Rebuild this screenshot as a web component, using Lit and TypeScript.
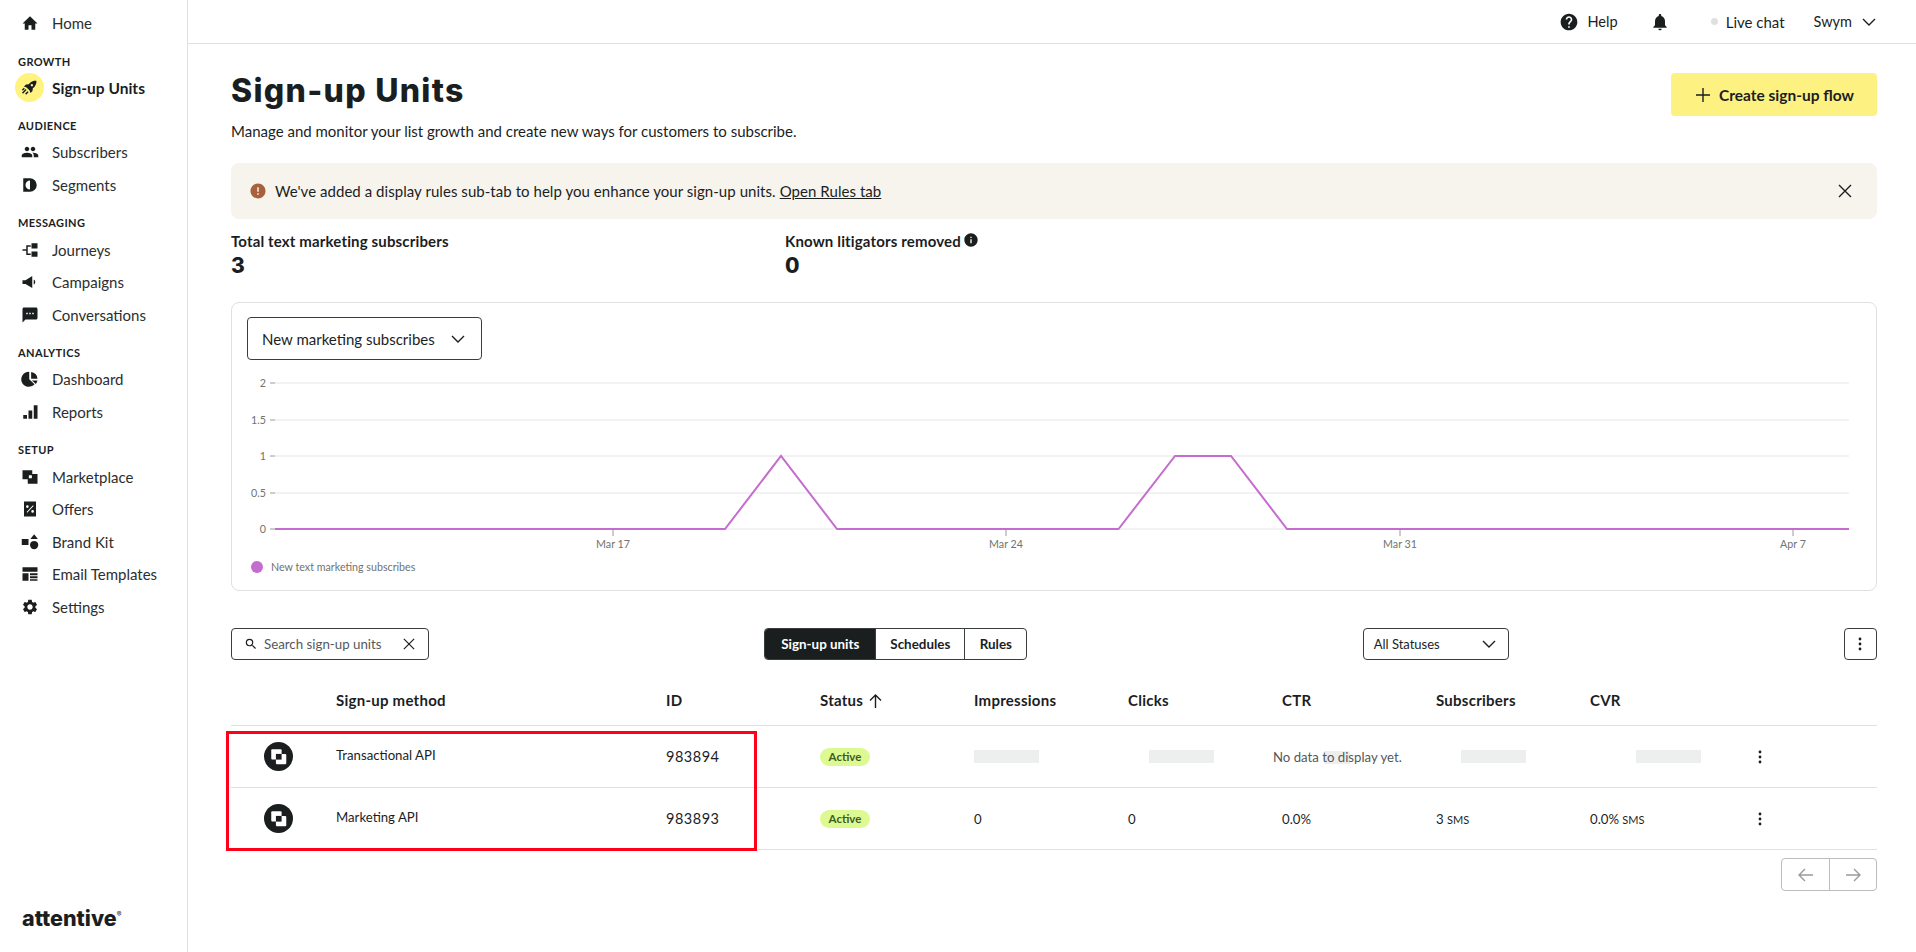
import { LitElement, html, css, svg } from 'lit';
import { customElement } from 'lit/decorators.js';

const icon = (body: unknown, size = 18) =>
    html`<svg width=${size} height=${size} viewBox="0 0 24 24" fill="currentColor">${body}</svg>`;

const chevron = (w = 14) => html`<svg width=${w} height=${w} viewBox="0 0 14 14" fill="none" stroke="currentColor" stroke-width="1.4"><path d="M1 4l6 6 6-6"/></svg>`;
const cross = (w = 14) => html`<svg width=${w} height=${w} viewBox="0 0 14 14" fill="none" stroke="currentColor" stroke-width="1.4"><path d="M1 1l12 12M13 1L1 13"/></svg>`;
const kebab = html`<svg width="4" height="14" viewBox="0 0 4 14" fill="currentColor"><circle cx="2" cy="2" r="1.4"/><circle cx="2" cy="7" r="1.4"/><circle cx="2" cy="12" r="1.4"/></svg>`;

const ICONS: Record<string, unknown> = {
    home: svg`<path d="M10 21v-6h4v6h5v-8.500h3L12 3 2 12.500h3V21z"/>`,
    rocket: svg`<path d="M21 3c-4.400.100-7.700 1.800-10 4.800L7.600 8.200 5 10.800l3.300 1.100 3.800 3.800 1.100 3.300 2.600-2.600.400-3.400c3-2.300 4.700-5.600 4.800-10zM15 10.500a1.500 1.500 0 1 1 0-3 1.500 1.500 0 0 1 0 3z"/><path d="M7 14l-4.500 4.500 1.300 1.300L8.300 15.300zM9.500 16.700l-3 3 1.300 1.300 3-3zM4.800 12.300l-2.500 2.500 1.300 1.300 2.500-2.500z"/>`,
    people: svg`<path d="M16 11c1.660 0 2.990-1.340 2.990-3S17.660 5 16 5c-1.660 0-3 1.340-3 3s1.340 3 3 3zm-8 0c1.660 0 2.990-1.340 2.990-3S9.660 5 8 5C6.340 5 5 6.340 5 8s1.340 3 3 3zm0 2c-2.330 0-7 1.170-7 3.500V19h14v-2.500c0-2.330-4.670-3.500-7-3.500zm8 0c-.290 0-.620.020-.970.050 1.160.840 1.970 1.970 1.970 3.450V19h6v-2.500c0-2.330-4.670-3.500-7-3.500z"/>`,
    segments: svg`<path fill-rule="evenodd" d="M3 3h9a9 9 0 0 1 0 18H3zM12 6a6 6 0 0 0 0 12z"/>`,
    journeys: svg`<rect x="14" y="3" width="8" height="7"/><rect x="14" y="14" width="8" height="7"/><path d="M2 11h5V5.500h6v2H9V16.500h4v2H7V13H2z"/>`,
    campaigns: svg`<path d="M2 9.500h4L15 4v16l-9-5.500H2zM17 8.500a4 4 0 0 1 0 7z"/>`,
    chat: svg`<path d="M20 2H4c-1.100 0-2 .900-2 2v18l4-4h14c1.100 0 2-.900 2-2V4c0-1.100-.900-2-2-2zM9 11H7V9h2v2zm4 0h-2V9h2v2zm4 0h-2V9h2v2z"/>`,
    pie: svg`<path d="M11 2.500v9.800l7 6.600A10 10 0 1 1 11 2.500zM13.500 2.500A9.700 9.700 0 0 1 22 11.500h-8.500zM14.500 14H22a10 10 0 0 1-2.200 4.500z"/>`,
    bars: svg`<rect x="3" y="16" width="5" height="5"/><rect x="10" y="10" width="5" height="11"/><rect x="17" y="3" width="5" height="18"/>`,
    market: svg`<path fill-rule="evenodd" d="M2 3h13v5h7v13H9v-6H2zM10.500 9.500v4h4v-4z"/>`,
    offers: svg`<path fill-rule="evenodd" d="M4 2h16v20H4zM8.500 7a1.800 1.800 0 1 0 0 3.600 1.800 1.800 0 0 0 0-3.600zM15.500 13.400a1.800 1.800 0 1 0 0 3.600 1.800 1.800 0 0 0 0-3.600zM16 7l-8.500 9 .8.900 8.500-9z"/>`,
    brand: svg`<rect x="1" y="8" width="9" height="8"/><path d="M17.500 1.500l5 6.500h-10z"/><circle cx="17.500" cy="16" r="5.500"/>`,
    email: svg`<path d="M2 3h20v6H2zM2 11h8v10H2zM12 11h10v2.500H12zM12 15h10v2.500H12zM12 19h10v2H12z"/>`,
    gear: svg`<path d="M19.140 12.940c.040-.300.060-.610.060-.940 0-.320-.020-.640-.070-.940l2.030-1.580c.180-.140.230-.410.120-.610l-1.920-3.320c-.120-.220-.370-.290-.590-.220l-2.390.960c-.500-.380-1.030-.700-1.620-.940l-.360-2.540c-.040-.240-.240-.410-.480-.410h-3.840c-.240 0-.430.170-.470.410l-.360 2.540c-.590.240-1.130.570-1.620.940l-2.390-.960c-.220-.080-.470 0-.590.220L2.740 8.870c-.120.210-.080.470.120.610l2.030 1.580c-.050.300-.090.630-.090.940s.020.640.070.940l-2.030 1.580c-.180.140-.230.410-.120.610l1.920 3.320c.120.220.370.290.590.220l2.390-.960c.500.380 1.030.700 1.620.940l.360 2.540c.050.240.240.410.480.410h3.840c.240 0 .440-.170.470-.410l.360-2.540c.590-.240 1.130-.560 1.620-.940l2.390.960c.220.080.470 0 .590-.220l1.920-3.320c.120-.220.070-.470-.120-.610l-2.010-1.580zM12 15.600c-1.980 0-3.600-1.620-3.600-3.600s1.620-3.600 3.600-3.600 3.600 1.620 3.600 3.600-1.620 3.600-3.600 3.600z"/>`,
    help: svg`<path d="M12 2C6.480 2 2 6.480 2 12s4.480 10 10 10 10-4.480 10-10S17.520 2 12 2zm1 17h-2v-2h2v2zm2.070-7.750l-.900.920C13.450 12.900 13 13.500 13 15h-2v-.500c0-1.100.450-2.100 1.170-2.830l1.240-1.260c.370-.360.590-.860.590-1.410 0-1.100-.900-2-2-2s-2 .900-2 2H8c0-2.210 1.790-4 4-4s4 1.790 4 4c0 .880-.360 1.680-.930 2.250z"/>`,
    bell: svg`<path d="M12 22c1.100 0 2-.900 2-2h-4c0 1.100.900 2 2 2zm6-6v-5c0-3.070-1.630-5.640-4.500-6.320V4c0-.830-.670-1.500-1.500-1.500s-1.500.670-1.500 1.500v.680C7.640 5.360 6 7.920 6 11v5l-2 2v1h16v-1l-2-2z"/>`,
    info: svg`<path d="M12 2C6.480 2 2 6.480 2 12s4.480 10 10 10 10-4.480 10-10S17.520 2 12 2zm1 15h-2v-6h2v6zm0-8h-2V7h2v2z"/>`,
    alert: svg`<path d="M12 2C6.480 2 2 6.480 2 12s4.480 10 10 10 10-4.480 10-10S17.520 2 12 2zm1 15h-2v-2h2v2zm0-4h-2V7h2v6z"/>`,
    search: svg`<path d="M15.500 14h-.790l-.280-.270A6.470 6.470 0 0 0 16 9.500 6.500 6.500 0 1 0 9.500 16c1.610 0 3.090-.590 4.230-1.570l.270.280v.790l5 4.990L20.490 19l-4.990-5zm-6 0C7.010 14 5 11.990 5 9.500S7.010 5 9.500 5 14 7.010 14 9.500 11.990 14 9.500 14z"/>`,
};

const NAV = [
    { items: [{ label: 'Home', icon: 'home' }] },
    { title: 'GROWTH', items: [{ label: 'Sign-up Units', icon: 'rocket', active: true }] },
    { title: 'AUDIENCE', items: [{ label: 'Subscribers', icon: 'people' }, { label: 'Segments', icon: 'segments' }] },
    { title: 'MESSAGING', items: [{ label: 'Journeys', icon: 'journeys' }, { label: 'Campaigns', icon: 'campaigns' }, { label: 'Conversations', icon: 'chat' }] },
    { title: 'ANALYTICS', items: [{ label: 'Dashboard', icon: 'pie' }, { label: 'Reports', icon: 'bars' }] },
    { title: 'SETUP', items: [{ label: 'Marketplace', icon: 'market' }, { label: 'Offers', icon: 'offers' }, { label: 'Brand Kit', icon: 'brand' }, { label: 'Email Templates', icon: 'email' }, { label: 'Settings', icon: 'gear' }] },
];

const COLUMNS = ['', 'Sign-up method', 'ID', 'Status', 'Impressions', 'Clicks', 'CTR', 'Subscribers', 'CVR', ''];

// chart coordinates are local to the card, x - 232 and y - 360 of the page
const GRID = [{ y: 23, l: '2' }, { y: 60, l: '1.5' }, { y: 96, l: '1' }, { y: 133, l: '0.5' }, { y: 169, l: '0' }];
const TICKS = [{ x: 381, l: 'Mar 17' }, { x: 774, l: 'Mar 24' }, { x: 1168, l: 'Mar 31' }, { x: 1561, l: 'Apr 7' }];
const LINE = '43,169 493,169 549,96 605,169 886.500,169 943,96 999,96 1055,169 1617,169';

@customElement('app-root')
export class AppRoot extends LitElement {
    static styles = css`
        :host {
            display: block;
            font-family: Lato, "Liberation Sans", sans-serif;
            color: #1b1e1f;
            font-size: 15px;
        }

        .page {
            display: flex;
            min-height: 952px;
        }

        .sidebar {
            flex: none;
            box-sizing: border-box;
            border-right: 1px solid #e0e0e0;
            width: 188px;
            padding-top: 7px;
            display: flex;
            flex-direction: column;
        }

        .nav-title {
            height: 21px;
            line-height: 21px;
            margin-top: 11px;
            padding-left: 18px;
            font-size: 11px;
            font-weight: 700;
            letter-spacing: 0.4px;
        }

        .nav-item {
            height: 32.6px;
            display: flex;
            align-items: center;
            font-size: 15px;
            color: #2b2e2f;
            white-space: nowrap;
        }

        .nav-icon {
            width: 52px;
            flex: none;
            display: flex;
            box-sizing: border-box;
            padding-left: 21px;
            color: #1b1e1f;
        }

        .nav-item.active {
            font-weight: 700;
            font-size: 15.500px;
            color: #1b1e1f;
        }

        .nav-item.active .nav-icon {
            padding-left: 15px;
        }

        .nav-item.active .nav-icon svg {
            flex: none;
            background: #fff27f;
            border-radius: 50%;
            padding: 5px;
        }

        .logo {
            margin-top: auto;
            padding: 0 0 22px 22px;
            font-family: Inter, sans-serif;
            font-size: 21.500px;
            font-weight: 800;
            line-height: 24px;
        }

        .logo sup {
            font-size: 7px;
            font-weight: 400;
            vertical-align: 9px;
            line-height: 0;
        }

        .main {
            flex: 1;
            min-width: 0;
        }

        .topbar {
            height: 43px;
            border-bottom: 1px solid #e0e0e0;
            display: flex;
            align-items: center;
            justify-content: flex-end;
            padding-right: 40px;
        }

        .topbar span {
            display: flex;
            align-items: center;
        }

        .help {
            font-size: 14.600px;
        }

        .help svg {
            margin-right: 8px;
        }

        .bell {
            margin-left: 32px;
        }

        .live {
            margin-left: 41px;
        }

        .live i {
            width: 7px;
            height: 7px;
            border-radius: 50%;
            background: #e0e0e0;
            margin-right: 8px;
        }

        .swym {
            margin-left: 29px;
            font-size: 14.5px;
        }

        .swym svg {
            margin-left: 10px;
        }

        .content {
            padding: 29px 39px 0 43px;
        }

        .title-row {
            display: flex;
            justify-content: space-between;
            align-items: flex-start;
        }

        h1 {
            margin: -2px 0 0;
            font-family: Inter, sans-serif;
            font-size: 32px;
            line-height: 40px;
            font-weight: 800;
            letter-spacing: 1.300px;
        }

        .sub {
            margin: 10px 0 0;
            line-height: 20px;
        }

        .create {
            width: 206px;
            height: 43px;
            box-sizing: border-box;
            padding-left: 2px;
            background: #fdf182;
            border-radius: 4px;
            display: flex;
            align-items: center;
            justify-content: center;
            gap: 9px;
            font-weight: 700;
            font-size: 15.500px;
        }

        .banner {
            margin-top: 22px;
            height: 56px;
            background: #f7f4ee;
            border-radius: 8px;
            display: flex;
            align-items: center;
            padding: 0 25px 0 18px;
            letter-spacing: 0.05px;
        }

        .banner .alert {
            color: #a9603d;
            margin-right: 8px;
            display: flex;
        }

        .banner u {
            margin-left: 4px;
        }

        .banner .close {
            margin-left: auto;
            display: flex;
        }

        .stats {
            display: flex;
            margin-top: 12px;
        }

        .stat {
            width: 554px;
        }

        .stat-label {
            font-weight: 700;
            line-height: 20px;
            letter-spacing: 0.15px;
            display: flex;
            align-items: center;
            gap: 2px;
        }

        .stat-label svg {
            margin-top: -3px;
        }

        .stat-value {
            font-family: Inter, sans-serif;
            font-weight: 800;
            font-size: 21px;
            line-height: 24px;
            margin-top: 3px;
        }

        .card {
            margin-top: 24px;
            height: 289px;
            box-sizing: border-box;
            border: 1px solid #e0e0e0;
            border-radius: 8px;
            padding-top: 14px;
        }

        .select {
            display: flex;
            align-items: center;
            justify-content: space-between;
            box-sizing: border-box;
            border: 1px solid #3a3d3e;
            border-radius: 4px;
            background: #fff;
        }

        .chart-select {
            width: 235px;
            height: 43px;
            margin-left: 15px;
            padding: 0 16px 0 14px;
        }

        .chart {
            display: block;
        }

        .chart text {
            font-family: Lato, "Liberation Sans", sans-serif;
            font-size: 10.700px;
            fill: #70736f;
        }

        .toolbar {
            margin-top: 37px;
            height: 32px;
            display: flex;
            justify-content: space-between;
            font-size: 13.300px;
        }

        .search {
            width: 198px;
            padding: 0 13px 0 12px;
            color: #55585a;
        }

        .search span {
            display: flex;
            align-items: center;
            gap: 6px;
            flex: 1;
        }

        .search svg:last-child {
            color: #1b1e1f;
        }

        .tabs {
            display: flex;
            border: 1px solid #3a3d3e;
            border-radius: 4px;
            overflow: hidden;
            font-weight: 700;
            font-size: 13.400px;
        }

        .tab {
            display: flex;
            align-items: center;
            justify-content: center;
            box-sizing: border-box;
        }

        .tab + .tab {
            border-left: 1px solid #3a3d3e;
        }

        .tab.on {
            background: #1b1e1f;
            color: #fff;
            width: 110px;
        }

        .tab.sched {
            width: 89px;
        }

        .tab.rules {
            width: 62px;
        }

        .status-select {
            width: 146px;
            padding: 0 12px 0 10px;
            font-size: 13px;
        }

        .more {
            width: 33px;
            justify-content: center;
        }

        .table {
            position: relative;
            margin-top: 15px;
            isolation: isolate;
        }

        .row {
            display: grid;
            grid-template-columns: 105px 330px repeat(7, 154px) 1fr;
            align-items: center;
            height: 61px;
            border-bottom: 1px solid #e0e0e0;
            font-size: 13.200px;
        }

        .row.head {
            height: 50px;
            font-size: 15px;
            font-weight: 700;
            letter-spacing: 0.25px;
        }

        .sort {
            display: inline-flex;
            vertical-align: -2px;
            margin-left: 6px;
        }

        .unit {
            display: flex;
            justify-content: center;
            width: 94px;
        }

        .method {
            margin-top: -4px;
        }

        .id {
            font-size: 14.500px;
            letter-spacing: 0.5px;
        }

        .badge {
            display: inline-block;
            width: 50px;
            height: 18px;
            line-height: 18px;
            text-align: center;
            border-radius: 9px;
            background: #ddfa92;
            color: #3f5a24;
            font-size: 11.500px;
            font-weight: 700;
        }

        .skel {
            height: 13px;
            width: 65px;
            background: #edefee;
        }

        .clicks-skel {
            margin-left: 21px;
        }

        .subs-skel {
            margin-left: 25px;
        }

        .cvr-skel {
            margin-left: 46px;
        }

        .nodata {
            position: relative;
            margin-left: -9px;
            color: #55585a;
            white-space: nowrap;
        }

        .nodata i {
            position: absolute;
            left: 51px;
            top: 2px;
            width: 26px;
            height: 13px;
            background: #edefee;
            z-index: -1;
        }

        .sms {
            font-size: 11px;
        }

        .row-more {
            display: flex;
            padding-left: 14px;
        }

        .red-box {
            position: absolute;
            left: -5px;
            top: 56px;
            width: 531px;
            height: 120px;
            box-sizing: border-box;
            border: 3px solid #ff0019;
        }

        .pager {
            display: flex;
            justify-content: flex-end;
            margin-top: 8px;
        }

        .pager div {
            display: flex;
            height: 33px;
            box-sizing: border-box;
            border: 1px solid #bcbcbc;
            border-radius: 4px;
            color: #9a9a9a;
        }

        .pager span {
            width: 47px;
            box-sizing: border-box;
            display: flex;
            align-items: center;
            justify-content: center;
        }

        .pager span + span {
            border-left: 1px solid #bcbcbc;
        }
    `;

    renderNav() {
        return NAV.map(group => html`
            ${group.title ? html`<div class="nav-title">${group.title}</div>` : ''}
            ${group.items.map(item => html`
                <div class="nav-item ${(item as any).active ? 'active' : ''}">
                    <span class="nav-icon">${icon(ICONS[item.icon], (item as any).active ? 19 : 18)}</span>
                    ${item.label}
                </div>`)}
        `);
    }

    renderChart() {
        return svg`
            ${GRID.map(g => svg`
                <line x1="38" x2="43" y1=${g.y} y2=${g.y} stroke="#9a9a9a"/>
                <line x1="43" x2="1617" y1=${g.y} y2=${g.y} stroke="#e6e6e6" stroke-width="1.200"/>
                <text x="34" y=${g.y + 4} text-anchor="end">${g.l}</text>`)}
            ${TICKS.map(t => svg`
                <line x1=${t.x} x2=${t.x} y1="170" y2="176" stroke="#9a9a9a"/>
                <text x=${t.x} y="188" text-anchor="middle">${t.l}</text>`)}
            <polyline points=${LINE} fill="none" stroke="#c56ccf" stroke-width="2"/>
            <circle cx="25" cy="207" r="6" fill="#c56ccf"/>
            <text x="39" y="211">New text marketing subscribes</text>`;
    }

    renderUnit() {
        return html`<span class="unit"><svg width="29" height="29" viewBox="0 0 28 28">
            <circle cx="14" cy="14" r="14" fill="#1b1e1f"/>
            <rect x="7" y="7" width="10" height="10" rx="1" fill="#fff"/>
            <rect x="11.500" y="11.500" width="10" height="10" rx="1" fill="#fff"/>
            <rect x="11.500" y="11.500" width="5.500" height="5.500" fill="#1b1e1f"/>
        </svg></span>`;
    }

    render() {
        return html`
            <div class="page">
                <nav class="sidebar">
                    ${this.renderNav()}
                    <div class="logo">attentive<sup>®</sup></div>
                </nav>
                <div class="main">
                    <header class="topbar">
                        <span class="help">${icon(ICONS.help, 20)}Help</span>
                        <span class="bell">${icon(ICONS.bell, 20)}</span>
                        <span class="live"><i></i>Live chat</span>
                        <span class="swym">Swym${chevron()}</span>
                    </header>
                    <div class="content">
                        <div class="title-row">
                            <div>
                                <h1>Sign-up Units</h1>
                                <p class="sub">Manage and monitor your list growth and create new ways for customers to subscribe.</p>
                            </div>
                            <div class="create">
                                <svg width="14" height="14" viewBox="0 0 14 14" stroke="currentColor" stroke-width="1.400"><path d="M7 0v14M0 7h14"/></svg>
                                Create sign-up flow
                            </div>
                        </div>
                        <div class="banner">
                            <span class="alert">${icon(ICONS.alert, 18)}</span>
                            We've added a display rules sub-tab to help you enhance your sign-up units.
                            <u>Open Rules tab</u>
                            <span class="close">${cross()}</span>
                        </div>
                        <div class="stats">
                            <div class="stat">
                                <div class="stat-label">Total text marketing subscribers</div>
                                <div class="stat-value">3</div>
                            </div>
                            <div class="stat">
                                <div class="stat-label">Known litigators removed ${icon(ICONS.info, 16)}</div>
                                <div class="stat-value">0</div>
                            </div>
                        </div>
                        <div class="card">
                            <div class="select chart-select">New marketing subscribes ${chevron()}</div>
                            <svg class="chart" width="1644" height="230" viewBox="0 0 1644 230">${this.renderChart()}</svg>
                        </div>
                        <div class="toolbar">
                            <div class="select search">
                                <span>${icon(ICONS.search, 14)}Search sign-up units</span>
                                ${cross(12)}
                            </div>
                            <div class="tabs">
                                <div class="tab on">Sign-up units</div>
                                <div class="tab sched">Schedules</div>
                                <div class="tab rules">Rules</div>
                            </div>
                            <div class="select status-select">All Statuses ${chevron()}</div>
                            <div class="select more">${kebab}</div>
                        </div>
                        <div class="table">
                            <div class="row head">
                                ${COLUMNS.map(c => html`<div>${c}${c === 'Status' ? html`<span class="sort"><svg width="13" height="14" viewBox="0 0 13 14" fill="none" stroke="currentColor" stroke-width="1.400"><path d="M6.500 14V1M1 6.500l5.500-5.500 5.500 5.500"/></svg></span>` : ''}</div>`)}
                            </div>
                            <div class="row">
                                ${this.renderUnit()}
                                <div class="method">Transactional API</div>
                                <div class="id">983894</div>
                                <div><span class="badge">Active</span></div>
                                <div class="skel"></div>
                                <div class="skel clicks-skel"></div>
                                <div class="nodata"><i></i>No data to display yet.</div>
                                <div class="skel subs-skel"></div>
                                <div class="skel cvr-skel"></div>
                                <div class="row-more">${kebab}</div>
                            </div>
                            <div class="row">
                                ${this.renderUnit()}
                                <div class="method">Marketing API</div>
                                <div class="id">983893</div>
                                <div><span class="badge">Active</span></div>
                                <div>0</div>
                                <div>0</div>
                                <div>0.0%</div>
                                <div>3 <span class="sms">SMS</span></div>
                                <div>0.0% <span class="sms">SMS</span></div>
                                <div class="row-more">${kebab}</div>
                            </div>
                            <div class="red-box"></div>
                        </div>
                        <div class="pager">
                            <div>
                                <span><svg width="15" height="14" viewBox="0 0 15 14" fill="none" stroke="currentColor" stroke-width="1.400"><path d="M15 7H1M7 1L1 7l6 6"/></svg></span>
                                <span><svg width="15" height="14" viewBox="0 0 15 14" fill="none" stroke="currentColor" stroke-width="1.400"><path d="M0 7h14M8 1l6 6-6 6"/></svg></span>
                            </div>
                        </div>
                    </div>
                </div>
            </div>
        `;
    }
}
